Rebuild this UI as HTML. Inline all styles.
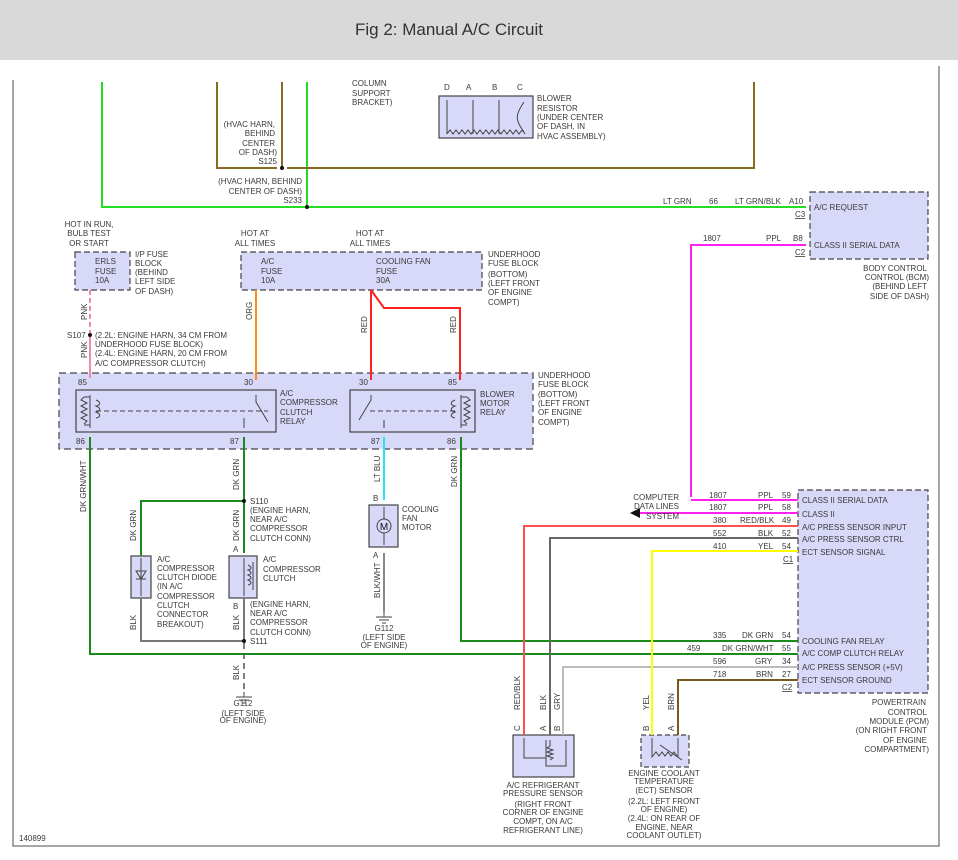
<!DOCTYPE html>
<html><head><meta charset="utf-8"><style>
html,body{margin:0;padding:0;background:#fff;width:958px;height:860px;overflow:hidden}
.hdr{position:absolute;left:0;top:0;width:958px;height:60px;background:#d9d9d9;font:17px "Liberation Sans",sans-serif;color:#333;line-height:60px;box-sizing:border-box;padding-left:355px}
svg{position:absolute;left:0;top:0}
text{font-family:"Liberation Sans",sans-serif;font-size:8px;fill:#3a3a3a}
</style></head><body>
<div class="hdr">Fig 2: Manual A/C Circuit</div>
<svg width="958" height="860" viewBox="0 0 958 860">
<path d="M13 80V846H939V66" stroke="#888" stroke-width="1.5" fill="none"/>
<g fill="#d8d8f8" stroke="#444" stroke-width="1.2">
<rect x="59" y="373" width="474" height="76" stroke-dasharray="7,4"/>
<rect x="76" y="390" width="200" height="42"/>
<rect x="350" y="390" width="125" height="42"/>
<rect x="75" y="252" width="55" height="38" stroke-dasharray="6,3"/>
<rect x="241" y="252" width="241" height="38" stroke-dasharray="6,3"/>
<rect x="439" y="96" width="94" height="42"/>
<rect x="810" y="192" width="118" height="67" stroke-dasharray="6,3"/>
<rect x="798" y="490" width="130" height="203" stroke-dasharray="6,3"/>
<rect x="131" y="556" width="20" height="42"/>
<rect x="229" y="556" width="28" height="42"/>
<rect x="369" y="505" width="29" height="42"/>
<rect x="513" y="735" width="61" height="42"/>
<rect x="641" y="735" width="48" height="32" stroke-dasharray="5,3"/>
</g>
<g fill="none" stroke-width="2">
<path d="M102 82V207H806M307 82V207" stroke="#22dd22"/>
<path d="M217 82V168H277M287 168H754V82M282 82V168" stroke="#8a6a20"/>
<path d="M691 497V245H806M691 500H798" stroke="#ff22ee"/>
<path d="M798 513H640" stroke="#ff22ee"/>
<path d="M90 290V333" stroke="#f08aa8" stroke-dasharray="5,3"/>
<path d="M90 335V378" stroke="#f08aa8"/>
<path d="M256 290V380" stroke="#ff8c1a"/>
<path d="M371 290V380M371 290L384 308H460V380" stroke="#ff2020"/>
<path d="M90 437V654H798M461 437V641H798" stroke="#1a8a1a"/>
<path d="M244 437V553M244 501H141V556" stroke="#1a8a1a"/>
<path d="M141 598V641H244M244 598V641" stroke="#777"/>
<path d="M244 643V692" stroke="#555" stroke-dasharray="6,4" stroke-width="1.5"/>
<path d="M384 437V500" stroke="#22e5f0"/>
<path d="M384 553V612" stroke="#888"/>
<path d="M524 735V526H798" stroke="#ff5050"/>
<path d="M550 735V538H798" stroke="#666"/>
<path d="M563 735V667H798" stroke="#bbb"/>
<path d="M652 735V551H798" stroke="#ffff00"/>
<path d="M678 735V680H798" stroke="#7a5a1a"/>
</g>
<g fill="#111"><circle cx="282" cy="168" r="2"/><circle cx="307" cy="207" r="2"/><circle cx="90" cy="335" r="2"/><circle cx="244" cy="501" r="2"/><circle cx="244" cy="641" r="2"/></g>
<polygon points="630,513 640,508 640,518" fill="#111"/>
<g fill="none" stroke="#444" stroke-width="1">
<path d="M447 134V100M473 134V100M499 134V100M524 102C515 115 515 120 524 132M447 134l3 -4 3 4 3 -4 3 4 3 -4 3 4 3 -4 3 4 3 -4 3 4 3 -4 3 4 3 -4 3 4 3 -4 3 4 3 -4 3 4 3 -4 3 4 3 -4 3 4 3 -4 3 4 3 -4 3 4"/>
<path d="M90 395V428M84 397h6M84 425h6M84 397l-3 3 6 3 -6 3 6 3 -6 3 6 3 -6 3 6 3 -3 3M96 400c5 2 5 5 0 6c5 2 5 5 0 6c5 2 5 5 0 6"/>
<path d="M96 411H268" stroke-dasharray="5,3"/>
<path d="M256 395V402l12 20M244 418V428"/>
<path d="M461 395V428M467 397h-6M467 425h-6M467 397l3 3 -6 3 6 3 -6 3 6 3 -6 3 6 3 -6 3 3 3M455 400c-5 2 -5 5 0 6c-5 2 -5 5 0 6c-5 2 -5 5 0 6"/>
<path d="M455 411H367" stroke-dasharray="5,3"/>
<path d="M371 395V400l-12 20M384 420V428"/>
<circle cx="384" cy="526" r="7"/><path d="M384 507V519M384 533V545"/>
<path d="M141 558V596M136 571h10l-5 8z M136 579h10"/>
<path d="M244 558V596M248 565c4 2 4 4 0 5c4 2 4 4 0 5c4 2 4 4 0 5c4 2 4 4 0 5M253 562V590"/>
<path d="M524 738V758H546M546 740V766H566V740M550 740v6l-3 2 6 2-6 2 6 2-6 2 6 2-3 2"/>
<path d="M652 738V757l4-5 3 4 3-4 3 4 3-4 3 4 3-4 3 4M678 738V757M660 745L682 760"/>
<path d="M244 692v5M236 697h16M239 700h10M242 703h4M384 612v5M376 617h16M379 620h10M382 623h4"/>
</g>
<text x="384" y="530" text-anchor="middle" style="font-size:10px;fill:#111">M</text>
<g>
<text x="352" y="86">COLUMN</text><text x="352" y="96">SUPPORT</text><text x="352" y="105">BRACKET)</text>
<text x="444" y="90">D</text><text x="466" y="90">A</text><text x="492" y="90">B</text><text x="517" y="90">C</text>
<text x="537" y="101">BLOWER</text><text x="537" y="111">RESISTOR</text><text x="537" y="120">(UNDER CENTER</text><text x="537" y="129">OF DASH, IN</text><text x="537" y="139">HVAC ASSEMBLY)</text>
<g text-anchor="end"><text x="275" y="127">(HVAC HARN,</text><text x="275" y="136">BEHIND</text><text x="275" y="146">CENTER</text><text x="277" y="155">OF DASH)</text><text x="277" y="164">S125</text>
<text x="302" y="184">(HVAC HARN, BEHIND</text><text x="302" y="194">CENTER OF DASH)</text><text x="302" y="203">S233</text></g>
<text x="663" y="204">LT GRN</text><text x="709" y="204">66</text><text x="735" y="204">LT GRN/BLK</text><text x="789" y="204">A10</text><text x="795" y="217" text-decoration="underline">C3</text>
<text x="814" y="210">A/C REQUEST</text>
<text x="703" y="241">1807</text><text x="766" y="241">PPL</text><text x="793" y="241">B8</text><text x="795" y="255" text-decoration="underline">C2</text>
<text x="814" y="248">CLASS II SERIAL DATA</text>
<g text-anchor="end"><text x="927" y="271">BODY CONTROL</text><text x="929" y="280">CONTROL (BCM)</text><text x="927" y="289">(BEHIND LEFT</text><text x="929" y="299">SIDE OF DASH)</text></g>
<g text-anchor="middle"><text x="89" y="227">HOT IN RUN,</text><text x="89" y="236">BULB TEST</text><text x="89" y="246">OR START</text>
<text x="255" y="236">HOT AT</text><text x="255" y="246">ALL TIMES</text><text x="370" y="236">HOT AT</text><text x="370" y="246">ALL TIMES</text></g>
<text x="95" y="264">ERLS</text><text x="95" y="274">FUSE</text><text x="95" y="283">10A</text>
<text x="135" y="257">I/P FUSE</text><text x="135" y="266">BLOCK</text><text x="135" y="275">(BEHIND</text><text x="135" y="284">LEFT SIDE</text><text x="135" y="294">OF DASH)</text>
<text x="261" y="264">A/C</text><text x="261" y="274">FUSE</text><text x="261" y="283">10A</text>
<text x="376" y="264">COOLING FAN</text><text x="376" y="274">FUSE</text><text x="376" y="283">30A</text>
<text x="488" y="257">UNDERHOOD</text><text x="488" y="266">FUSE BLOCK</text><text x="488" y="277">(BOTTOM)</text><text x="488" y="286">(LEFT FRONT</text><text x="488" y="295">OF ENGINE</text><text x="488" y="305">COMPT)</text>
<text x="67" y="338">S107</text>
<text x="95" y="338">(2.2L: ENGINE HARN, 34 CM FROM</text><text x="95" y="347">UNDERHOOD FUSE BLOCK)</text><text x="95" y="356">(2.4L: ENGINE HARN, 20 CM FROM</text><text x="95" y="366">A/C COMPRESSOR CLUTCH)</text>
<text x="78" y="385">85</text><text x="244" y="385">30</text><text x="359" y="385">30</text><text x="448" y="385">85</text>
<text x="76" y="444">86</text><text x="230" y="444">87</text><text x="371" y="444">87</text><text x="447" y="444">86</text>
<text x="280" y="396">A/C</text><text x="280" y="405">COMPRESSOR</text><text x="280" y="415">CLUTCH</text><text x="280" y="424">RELAY</text>
<text x="480" y="397">BLOWER</text><text x="480" y="406">MOTOR</text><text x="480" y="415">RELAY</text>
<text x="538" y="378">UNDERHOOD</text><text x="538" y="387">FUSE BLOCK</text><text x="538" y="397">(BOTTOM)</text><text x="538" y="406">(LEFT FRONT</text><text x="538" y="415">OF ENGINE</text><text x="538" y="425">COMPT)</text>
<text x="250" y="504">S110</text><text x="250" y="513">(ENGINE HARN,</text><text x="250" y="522">NEAR A/C</text><text x="250" y="531">COMPRESSOR</text><text x="250" y="541">CLUTCH CONN)</text>
<text x="157" y="562">A/C</text><text x="157" y="571">COMPRESSOR</text><text x="157" y="580">CLUTCH DIODE</text><text x="157" y="589">(IN A/C</text><text x="157" y="599">COMPRESSOR</text><text x="157" y="608">CLUTCH</text><text x="157" y="617">CONNECTOR</text><text x="157" y="627">BREAKOUT)</text>
<text x="263" y="562">A/C</text><text x="263" y="572">COMPRESSOR</text><text x="263" y="581">CLUTCH</text>
<text x="233" y="552">A</text><text x="233" y="609">B</text><text x="373" y="501">B</text><text x="373" y="558">A</text>
<text x="250" y="607">(ENGINE HARN,</text><text x="250" y="616">NEAR A/C</text><text x="250" y="625">COMPRESSOR</text><text x="250" y="635">CLUTCH CONN)</text><text x="250" y="644">S111</text>
<text x="402" y="512">COOLING</text><text x="402" y="521">FAN</text><text x="402" y="530">MOTOR</text>
<g text-anchor="middle"><text x="384" y="631">G112</text><text x="384" y="640">(LEFT SIDE</text><text x="384" y="648">OF ENGINE)</text>
<text x="243" y="706">G112</text><text x="243" y="716">(LEFT SIDE</text><text x="243" y="723">OF ENGINE)</text></g>
<g text-anchor="end"><text x="679" y="500">COMPUTER</text><text x="679" y="509">DATA LINES</text><text x="679" y="519">SYSTEM</text></g>
<text x="709" y="498">1807</text><text x="758" y="498">PPL</text><text x="782" y="498">59</text>
<text x="709" y="510">1807</text><text x="758" y="510">PPL</text><text x="782" y="510">58</text>
<text x="713" y="523">380</text><text x="740" y="523">RED/BLK</text><text x="782" y="523">49</text>
<text x="713" y="536">552</text><text x="758" y="536">BLK</text><text x="782" y="536">52</text>
<text x="713" y="549">410</text><text x="758" y="549">YEL</text><text x="782" y="549">54</text>
<text x="783" y="562" text-decoration="underline">C1</text>
<text x="713" y="638">335</text><text x="742" y="638">DK GRN</text><text x="782" y="638">54</text>
<text x="687" y="651">459</text><text x="722" y="651">DK GRN/WHT</text><text x="782" y="651">55</text>
<text x="713" y="664">596</text><text x="755" y="664">GRY</text><text x="782" y="664">34</text>
<text x="713" y="677">718</text><text x="756" y="677">BRN</text><text x="782" y="677">27</text>
<text x="782" y="690" text-decoration="underline">C2</text>
<text x="802" y="503">CLASS II SERIAL DATA</text><text x="802" y="517">CLASS II</text><text x="802" y="530">A/C PRESS SENSOR INPUT</text><text x="802" y="542">A/C PRESS SENSOR CTRL</text><text x="802" y="555">ECT SENSOR SIGNAL</text>
<text x="802" y="644">COOLING FAN RELAY</text><text x="802" y="656">A/C COMP CLUTCH RELAY</text><text x="802" y="670">A/C PRESS SENSOR (+5V)</text><text x="802" y="683">ECT SENSOR GROUND</text>
<g text-anchor="end"><text x="926" y="705">POWERTRAIN</text><text x="927" y="715">CONTROL</text><text x="929" y="724">MODULE (PCM)</text><text x="927" y="733">(ON RIGHT FRONT</text><text x="927" y="743">OF ENGINE</text><text x="929" y="752">COMPARTMENT)</text></g>
<g text-anchor="middle"><text x="543" y="788">A/C REFRIGERANT</text><text x="543" y="796">PRESSURE SENSOR</text><text x="543" y="807">(RIGHT FRONT</text><text x="543" y="815">CORNER OF ENGINE</text><text x="543" y="824">COMPT, ON A/C</text><text x="543" y="833">REFRIGERANT LINE)</text>
<text x="664" y="776">ENGINE COOLANT</text><text x="664" y="784">TEMPERATURE</text><text x="664" y="793">(ECT) SENSOR</text><text x="664" y="804">(2.2L: LEFT FRONT</text><text x="664" y="812">OF ENGINE)</text><text x="664" y="821">(2.4L: ON REAR OF</text><text x="664" y="830">ENGINE, NEAR</text><text x="664" y="838">COOLANT OUTLET)</text></g>
<text x="19" y="841">140899</text>
</g>
<g>
<text transform="translate(87,320) rotate(-90)">PNK</text>
<text transform="translate(87,358) rotate(-90)">PNK</text>
<text transform="translate(252,320) rotate(-90)">ORG</text>
<text transform="translate(367,333) rotate(-90)">RED</text>
<text transform="translate(456,333) rotate(-90)">RED</text>
<text transform="translate(86,512) rotate(-90)">DK GRN/WHT</text>
<text transform="translate(239,490) rotate(-90)">DK GRN</text>
<text transform="translate(136,541) rotate(-90)">DK GRN</text>
<text transform="translate(239,541) rotate(-90)">DK GRN</text>
<text transform="translate(380,482) rotate(-90)">LT BLU</text>
<text transform="translate(457,487) rotate(-90)">DK GRN</text>
<text transform="translate(136,630) rotate(-90)">BLK</text>
<text transform="translate(239,630) rotate(-90)">BLK</text>
<text transform="translate(239,680) rotate(-90)">BLK</text>
<text transform="translate(380,598) rotate(-90)">BLK/WHT</text>
<text transform="translate(520,710) rotate(-90)">RED/BLK</text>
<text transform="translate(546,710) rotate(-90)">BLK</text>
<text transform="translate(560,710) rotate(-90)">GRY</text>
<text transform="translate(649,710) rotate(-90)">YEL</text>
<text transform="translate(674,710) rotate(-90)">BRN</text>
<text transform="translate(520,731) rotate(-90)">C</text>
<text transform="translate(546,731) rotate(-90)">A</text>
<text transform="translate(560,731) rotate(-90)">B</text>
<text transform="translate(649,731) rotate(-90)">B</text>
<text transform="translate(674,731) rotate(-90)">A</text>
</g>
</svg>
</body></html>
